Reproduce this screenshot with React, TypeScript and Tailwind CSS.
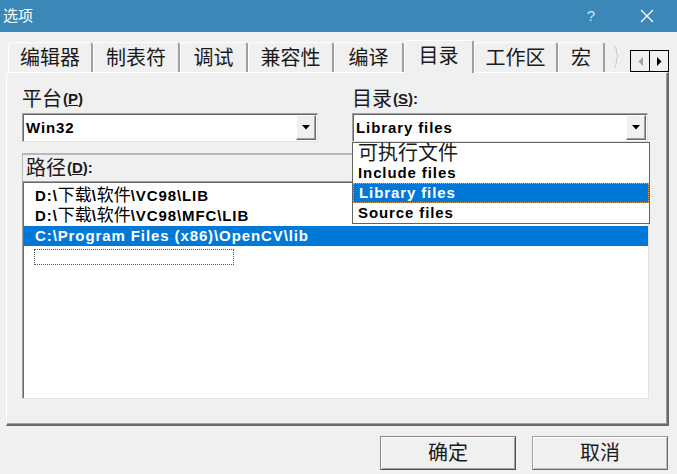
import React from "react";

const FONT = { fontFamily: '"Liberation Sans", "Noto Sans CJK SC", sans-serif' };

const tabs = [
  { label: "编辑器", w: "w-[85px]" },
  { label: "制表符", w: "w-[87px]" },
  { label: "调试", w: "w-[68px]" },
  { label: "兼容性", w: "w-[86px]" },
  { label: "编译", w: "w-[70px]" },
  { label: "目录", w: "w-[70px]", active: true },
  { label: "工作区", w: "w-[84px]" },
  { label: "宏", w: "w-[47px]" },
];

function DropButton() {
  return (
    <div className="w-[20px] h-[25px] my-auto mr-[1px] bg-[#f0f0f0] border-t border-l border-white border-r border-b border-r-[#696969] border-b-[#696969] shadow-[inset_-1px_-1px_0_#a0a0a0] flex items-center justify-center">
      <svg width="8" height="5" viewBox="0 0 8 5">
        <path d="M0 0H8L4 4.5Z" fill="#000" />
      </svg>
    </div>
  );
}

function Combo({ value }: { value: string }) {
  return (
    <div className="h-[29px] bg-white flex items-stretch border border-t-[#a0a0a0] border-l-[#a0a0a0] border-r-[#e3e3e3] border-b-[#e3e3e3] shadow-[inset_1px_1px_0_#696969]">
      <div className="flex-1 pl-[3px] pt-[1px] flex items-center text-[15px] font-bold tracking-[0.9px] text-black">
        {value}
      </div>
      <DropButton />
    </div>
  );
}

function PathRow({
  parts,
  selected,
}: {
  parts: { t: string; cjk?: boolean }[];
  selected?: boolean;
}) {
  return (
    <div
      className={
        "h-[20px] pl-[11px] flex items-center text-[15px] font-bold tracking-[0.9px] whitespace-nowrap " +
        (selected ? "bg-[#0078d7] text-white" : "text-black")
      }
    >
      {parts.map((p, i) =>
        p.cjk ? (
          <span key={i} className="font-normal text-[17px] tracking-normal">
            {p.t}
          </span>
        ) : (
          <span key={i}>{p.t}</span>
        )
      )}
    </div>
  );
}

export default function App() {
  return (
    <div className="w-[677px] h-[474px] bg-[#f0f0f0] flex flex-col overflow-hidden select-none" style={FONT}>
      {/* title bar */}
      <div className="h-[32px] bg-[#3a87b8] flex items-center text-white shrink-0">
        <div className="pl-[3px] text-[15px]">选项</div>
        <div className="ml-auto flex items-center pr-[7px]">
          <div className="w-[46px] text-center text-[15px] text-[#cfe0ec]">?</div>
          <div className="w-[46px] ml-[10px] flex justify-center">
            <svg width="14" height="14" viewBox="0 0 14 14">
              <path d="M1 1L13 13M13 1L1 13" stroke="#fff" strokeWidth="1.2" />
            </svg>
          </div>
        </div>
      </div>

      {/* tab strip */}
      <div className="h-[40px] shrink-0 flex items-end pl-[8px] relative z-10">
        {tabs.map((t) =>
          t.active ? (
            <div
              key={t.label}
              className={`${t.w} h-[33px] -mb-[1px] bg-[#f0f0f0] rounded-t-[3px] border-t border-l border-white border-r-2 border-r-[#a0a0a0] flex items-center justify-center text-[20px] text-[#1a1a1a] pb-[2px]`}
            >
              {t.label}
            </div>
          ) : (
            <div
              key={t.label}
              className={`${t.w} h-[30px] rounded-t-[3px] border-t border-l border-white border-r-2 border-r-[#a0a0a0] flex items-center justify-center text-[20px] text-[#1a1a1a]`}
            >
              {t.label}
            </div>
          )
        )}
        <div className="w-[25px] h-[30px] flex items-center pl-[8px]">
          <svg width="8" height="24" viewBox="0 0 8 24">
            <path d="M1 1C5 3 2 8 5 11C2 14 5 19 1 23" stroke="#c8c8c8" fill="none" strokeWidth="1" />
          </svg>
        </div>
        <div className="w-[39px] h-[22px] flex border border-black bg-[#f0f0f0]">
          <div className="flex-1 flex items-center justify-center border-r border-black">
            <svg width="5" height="9" viewBox="0 0 5 9">
              <path d="M5 0V9L0.5 4.5Z" fill="#a0a0a0" />
            </svg>
          </div>
          <div className="flex-1 flex items-center justify-center">
            <svg width="5" height="9" viewBox="0 0 5 9">
              <path d="M0 0V9L4.5 4.5Z" fill="#000" />
            </svg>
          </div>
        </div>
      </div>

      {/* panel */}
      <div className="ml-[6px] w-[663px] h-[354px] shrink-0 border-t border-l border-white border-r-2 border-b-2 border-r-[#696969] border-b-[#696969] shadow-[inset_-1px_-1px_0_#a0a0a0] pl-[15px] pt-[14px]">
        <div className="flex gap-[34px] w-[626px]">
          <div className="w-[296px]">
            <div className="h-[24px] flex items-center text-[20px] text-[#1a1a1a]">
              平台<span className="text-[15px] font-bold ml-[1px]">(<u>P</u>)</span>
            </div>
            <div className="mt-[2px]">
              <Combo value="Win32" />
            </div>
          </div>
          <div className="w-[296px]">
            <div className="h-[24px] flex items-center text-[20px] text-[#1a1a1a]">
              目录<span className="text-[15px] font-bold ml-[1px]">(<u>S</u>):</span>
            </div>
            <div className="mt-[2px] relative z-20">
              <Combo value="Library files" />
              <div className="absolute left-0 top-full w-[298px] bg-white border border-[#646464]">
                <div className="h-[20px] pl-[5px] flex items-center text-[20px] text-[#1a1a1a] leading-none">
                  可执行文件
                </div>
                <div className="h-[20px] pl-[5px] flex items-center text-[15px] font-bold tracking-[0.9px] text-black">
                  Include files
                </div>
                <div className="h-[20px] pl-[5px] flex items-center text-[15px] font-bold tracking-[0.9px] text-white bg-[#0078d7] border border-dotted border-[#e0a060]">
                  Library files
                </div>
                <div className="h-[20px] pl-[5px] flex items-center text-[15px] font-bold tracking-[0.9px] text-black">
                  Source files
                </div>
              </div>
            </div>
          </div>
        </div>

        {/* path list */}
        <div className="mt-[11px] w-[627px]">
          <div className="h-[28px] border-t-2 border-l border-r border-t-[#b8b8b8] border-l-[#b8b8b8] border-r-[#e3e3e3] flex items-center pl-[3px] text-[20px] text-[#1a1a1a]">
            路径<span className="text-[15px] font-bold ml-[1px]">(<u>D</u>):</span>
          </div>
          <div className="h-[218px] bg-white border border-t-[#a0a0a0] border-l-[#a0a0a0] border-r-[#e3e3e3] border-b-[#e3e3e3] shadow-[inset_1px_1px_0_#696969] pt-[4px] pl-[1px]">
            <PathRow
              parts={[
                { t: "D:\\" },
                { t: "下载", cjk: true },
                { t: "\\" },
                { t: "软件", cjk: true },
                { t: "\\VC98\\LIB" },
              ]}
            />
            <PathRow
              parts={[
                { t: "D:\\" },
                { t: "下载", cjk: true },
                { t: "\\" },
                { t: "软件", cjk: true },
                { t: "\\VC98\\MFC\\LIB" },
              ]}
            />
            <PathRow parts={[{ t: "C:\\Program Files (x86)\\OpenCV\\lib" }]} selected />
            <div className="h-[20px] pt-[3px] pl-[10px]">
              <div className="w-[200px] h-[16px] border border-dotted border-[#555]" />
            </div>
          </div>
        </div>
      </div>

      {/* buttons */}
      <div className="mt-[10px] flex justify-end gap-[16px] pr-[9px]">
        <button className="w-[136px] h-[34px] bg-[#f0f0f0] border border-[#8a8a8a] border-r-[#505050] border-b-[#505050] shadow-[inset_1px_1px_0_#fff,inset_-1px_-1px_0_#a0a0a0] text-[20px] text-[#1a1a1a] flex items-center justify-center">
          确定
        </button>
        <button className="w-[136px] h-[34px] bg-[#f0f0f0] border border-[#a0a0a0] border-r-[#696969] border-b-[#696969] shadow-[inset_1px_1px_0_#fff,inset_-1px_-1px_0_#c0c0c0] text-[20px] text-[#1a1a1a] flex items-center justify-center">
          取消
        </button>
      </div>
    </div>
  );
}
